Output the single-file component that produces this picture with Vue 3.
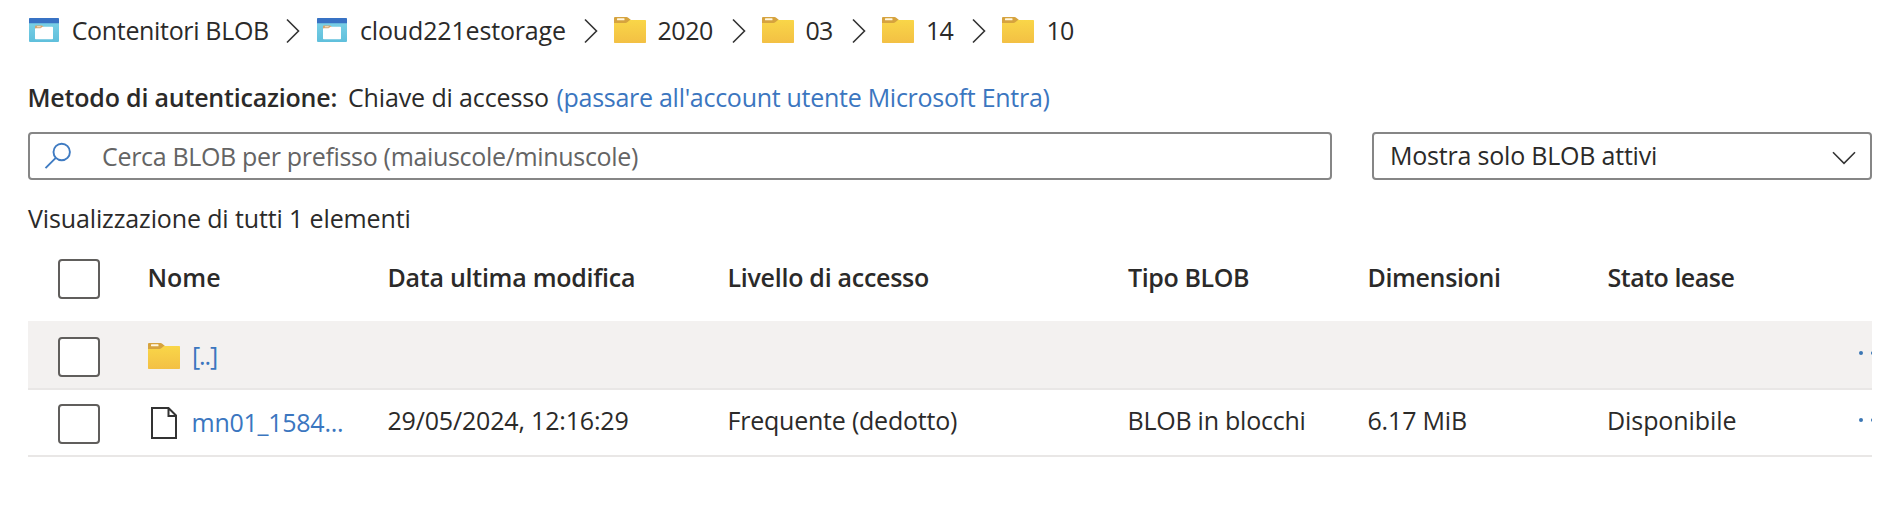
<script setup>
const crumbs = [
  { label: 'Contenitori BLOB', icon: 'container', cls: 't-root' },
  { label: 'cloud221estorage', icon: 'container', cls: 't-cloud' },
  { label: '2020', icon: 'folder', cls: 't-year' },
  { label: '03', icon: 'folder', cls: 't-num' },
  { label: '14', icon: 'folder', cls: 't-num' },
  { label: '10', icon: 'folder', cls: 't-num' }
]
const headers = [
  { label: 'Nome', cls: 'h-name' },
  { label: 'Data ultima modifica', cls: 'h-date' },
  { label: 'Livello di accesso', cls: 'h-tier' },
  { label: 'Tipo BLOB', cls: 'h-type' },
  { label: 'Dimensioni', cls: 'h-size' },
  { label: 'Stato lease', cls: 'h-lease' }
]
const cells = [
  { label: '29/05/2024, 12:16:29', cls: 'c-date' },
  { label: 'Frequente (dedotto)', cls: 'c-tier' },
  { label: 'BLOB in blocchi', cls: 'c-type' },
  { label: '6.17 MiB', cls: 'c-size' },
  { label: 'Disponibile', cls: 'c-lease' }
]
</script>

<template>
  <main class="page">
    <svg class="defs" width="0" height="0" aria-hidden="true">
      <defs>
        <linearGradient id="gold" x1="0" y1="0" x2="0" y2="1">
          <stop offset="0" stop-color="#f9d648" />
          <stop offset="1" stop-color="#f3c044" />
        </linearGradient>
        <linearGradient id="sky" x1="0" y1="0" x2="0" y2="1">
          <stop offset="0" stop-color="#7fd3e8" />
          <stop offset="1" stop-color="#5fbfdc" />
        </linearGradient>
        <symbol id="folder" viewBox="0 0 32 26">
          <path d="M1 0h11.5q1 0 1.700.7L17 3v3H0V1q0-1 1-1z" fill="#d6a33e" />
          <path d="M0 6h11.500q1 0 1.800-.7L16 3h15.300q.7 0 .7.7v21.600q0 .7-.7.7H.7q-.7 0-.7-.7z" fill="url(#gold)" />
          <rect x="3" y="1.300" width="7.500" height="2" rx=".5" fill="#fff6de" />
        </symbol>
        <symbol id="container" viewBox="0 0 30 24">
          <rect width="30" height="24" rx="1" fill="url(#sky)" />
          <path d="M1 0h28q1 0 1 1v4.300H0V1q0-1 1-1z" fill="#3872c4" />
          <path d="M7 7.500h6l2 1.500v2.500H7q-1 0-1-1v-2q0-1 1-1z" fill="#d5a46c" />
          <path d="M6.700 10.200h4.800l2-1.400h9.800q.7 0 .7.7v11q0 .7-.7.700H6.700q-.7 0-.7-.7v-9.600q0-.7.7-.7z" fill="#fff" />
          <rect x="7.800" y="8.300" width="4" height="1" rx=".5" fill="#f6e6d0" />
        </symbol>
      </defs>
    </svg>

    <nav class="crumbs">
      <template v-for="(c, i) in crumbs" :key="c.label">
        <svg v-if="i" class="sep" viewBox="0 0 14 26"><path d="M1 1.500l11.500 11.500L1 24.500" /></svg>
        <svg :class="['icon', c.icon]"><use :href="'#' + c.icon" /></svg>
        <span :class="c.cls">{{ c.label }}</span>
      </template>
    </nav>

    <p class="auth">
      <strong>Metodo di autenticazione:</strong>
      <span class="key">Chiave di accesso</span>
      <a class="switch">(passare all'account utente Microsoft Entra)</a>
    </p>

    <div class="filters">
      <div class="search">
        <svg class="lens" viewBox="0 0 28 28"><circle cx="17.700" cy="10" r="8.200" /><path d="M11.800 15.800L1.500 26.200" /></svg>
        <span class="placeholder">Cerca BLOB per prefisso (maiuscole/minuscole)</span>
      </div>
      <div class="select">
        <span class="value">Mostra solo BLOB attivi</span>
        <svg class="down" viewBox="0 0 24 14"><path d="M1 1.300l11 11 11-11" /></svg>
      </div>
    </div>

    <p class="count">Visualizzazione di tutti 1 elementi</p>

    <section class="table">
      <div class="row head">
        <i class="check"></i>
        <span v-for="h in headers" :key="h.label" :class="h.cls">{{ h.label }}</span>
      </div>
      <div class="row parent">
        <i class="check"></i>
        <a class="name"><svg class="icon folder"><use href="#folder" /></svg><span class="up">[..]</span></a>
        <svg class="more" viewBox="0 0 13 6"><circle cx="2" cy="3" r="2" /><circle cx="14" cy="3" r="2" /></svg>
      </div>
      <div class="row file">
        <i class="check"></i>
        <a class="name">
          <svg class="doc" viewBox="0 0 26 32"><path d="M1 1h16.500L25 8.500V31H1zM17.500 1v8H25" /></svg>
          <span class="blob">mn01_1584...</span>
        </a>
        <span v-for="c in cells" :key="c.label" :class="c.cls">{{ c.label }}</span>
        <svg class="more" viewBox="0 0 13 6"><circle cx="2" cy="3" r="2" /><circle cx="14" cy="3" r="2" /></svg>
      </div>
    </section>
  </main>
</template>

<style>
body { margin: 0; background: #fff; }
</style>

<style scoped>
.page {
  box-sizing: border-box;
  width: 1898px;
  height: 506px;
  padding: 13px 26px 0 28px;
  overflow: hidden;
  background: #fff;
  color: #2b2a29;
  font: 400 25px/34px "Open Sans", "Noto Sans", sans-serif;
  white-space: nowrap;
}
.defs { display: block; }
p { margin: 0; }
a { color: #3b76bf; }
svg { display: block; }

.crumbs {
  display: grid;
  grid-template-columns:
    42.700px 214.300px
    31px 43px 224px
    30px 43.500px 74.500px
    30px 43.500px 46.500px
    30px 44px 46px
    30px 44.500px 60px;
  height: 34px;
  padding-left: 1px;
}
.container { width: 30px; height: 24px; margin-top: 5px; }
.folder { width: 32px; height: 26px; margin-top: 4px; }
.sep { width: 14px; height: 26px; margin-top: 5px; }
.sep path, .down path, .doc path, .lens { fill: none; stroke: #333; stroke-width: 1.600; }
.t-root { letter-spacing: -0.335px; }
.t-cloud { letter-spacing: -0.161px; }
.t-year { letter-spacing: -0.461px; }
.t-num { letter-spacing: -0.8px; }

.auth { display: flex; height: 34px; margin-top: 33px; }
.auth strong { width: 320.500px; margin-left: -0.500px; font-weight: 600; letter-spacing: -0.197px; }
.key { width: 208.500px; letter-spacing: -0.132px; }
.switch { letter-spacing: -0.281px; }

.filters { display: flex; gap: 40px; margin-top: 18px; }
.search, .select {
  display: flex;
  box-sizing: border-box;
  height: 48px;
  border: 2px solid #868686;
  border-radius: 4px;
}
.search { width: 1304px; padding: 5px 0 0 14px; }
.lens { width: 28px; height: 28px; margin: 3px 30px 0 0; stroke: #3f7bc2; stroke-width: 1.900; }
.placeholder { color: #646464; letter-spacing: -0.323px; }
.select { width: 500px; justify-content: space-between; padding: 4px 14px 0 16px; }
.value { letter-spacing: -0.207px; }
.down { width: 24px; height: 14px; margin-top: 13px; }

.count { height: 34px; margin-top: 21px; letter-spacing: -0.127px; }

.table { width: 1844px; overflow: hidden; }
.row {
  display: grid;
  grid-template-columns: 119.500px 240px 340px 400px 240px 239.500px 252px 13px;
  box-sizing: border-box;
}
.check {
  box-sizing: border-box;
  width: 42px;
  height: 40px;
  margin-left: 30px;
  border: 2px solid #605e5c;
  border-radius: 4px;
  background: #fff;
}
.head { height: 86px; padding-top: 24px; font-weight: 600; }
.head span { margin-top: 1px; }
.parent { height: 69px; padding-top: 16px; background: #f3f1f0; border-bottom: 2px solid #e9e7e6; }
.file { height: 67px; padding-top: 14px; border-bottom: 2px solid #e9e7e6; }
.file > span { margin-top: -1px; }
.name { display: flex; height: 34px; }
.parent .folder { margin: 6px 12px 0 0.500px; }
.up { margin-top: 1px; letter-spacing: -1.104px; }
.doc { width: 26px; height: 32px; margin: 3px 14.500px 0 3.500px; }
.doc path { stroke-width: 2; }
.blob { margin-top: 1px; letter-spacing: -0.257px; }
.more { grid-column: 8; width: 13px; height: 6px; margin-top: 13px; fill: #3b76b4; }

.h-name { letter-spacing: 0; }
.h-date { letter-spacing: -0.255px; }
.h-tier { letter-spacing: -0.271px; }
.h-type { letter-spacing: -0.394px; padding-left: 0.500px; }
.h-size { letter-spacing: -0.357px; }
.h-lease { letter-spacing: -0.482px; padding-left: 0.500px; }
.c-date { letter-spacing: -0.172px; }
.c-tier { letter-spacing: -0.222px; }
.c-type { letter-spacing: -0.240px; }
.c-size { letter-spacing: -0.177px; }
.c-lease { letter-spacing: -0.076px; }
</style>
